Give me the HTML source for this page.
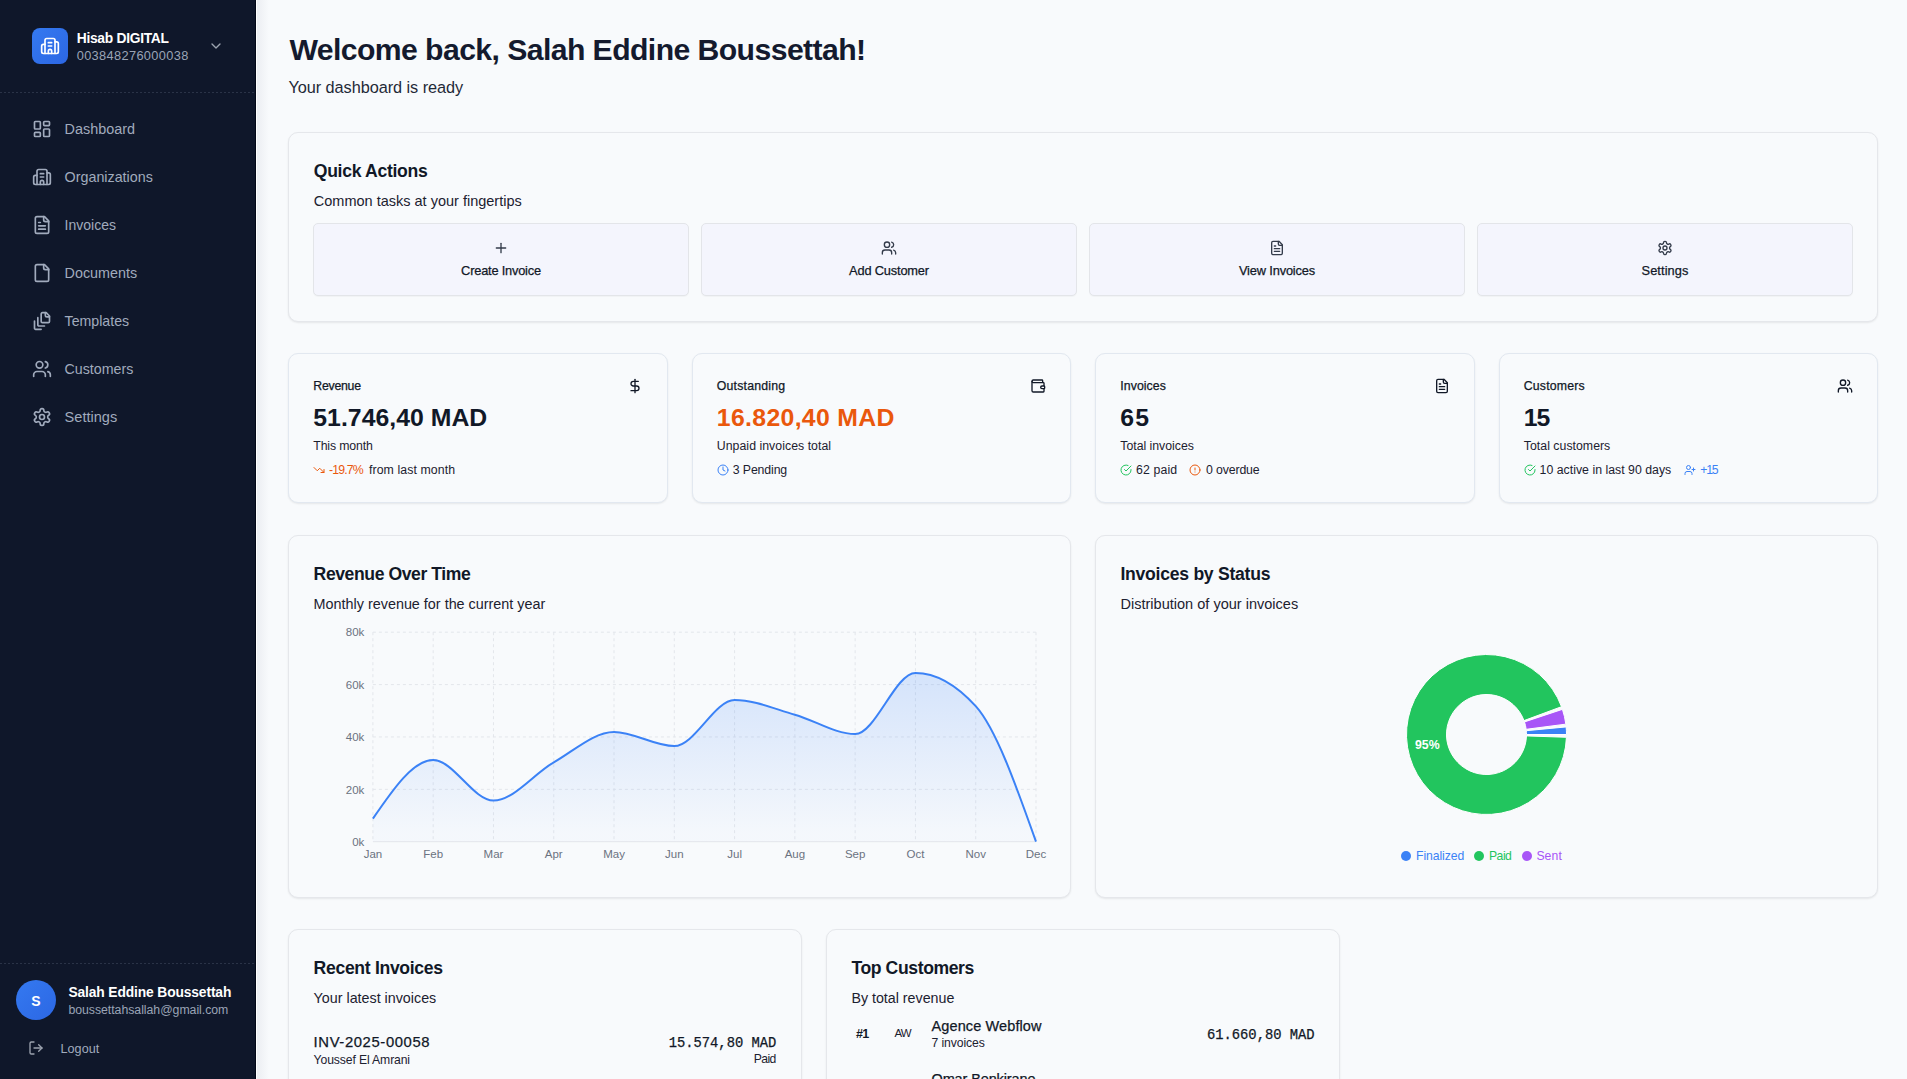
<!DOCTYPE html><html><head><meta charset="utf-8"><title>Dashboard</title><style>
*{box-sizing:border-box;margin:0;padding:0}
html,body{width:1907px;height:1079px;overflow:hidden}
body{position:relative;background:#f8fafc;font-family:"Liberation Sans",sans-serif;}
.t{position:absolute;white-space:nowrap;line-height:1;}
.ic{position:absolute;display:block}
.card{position:absolute;border:1px solid #e5e7eb;border-radius:10px;background:#f8fafc;box-shadow:0 1px 2px rgba(0,0,0,0.08)}
.qa{position:absolute;border:1px solid #e3e5e9;border-radius:5px;background:#f4f5fd;box-shadow:0 1px 1px rgba(0,0,0,0.03)}
</style></head><body>
<div style="position:absolute;left:0;top:0;width:256px;height:1079px;background:#0f172a"></div>
<div style="position:absolute;left:255px;top:0;width:1px;height:1079px;background:#020817"></div>
<div style="position:absolute;left:256px;top:0;width:1px;height:1079px;background:#ffffff"></div>
<div style="position:absolute;left:257px;top:0;width:12px;height:1079px;background:linear-gradient(90deg,#eceef2,rgba(248,250,252,0))"></div>
<div style="position:absolute;left:32px;top:28px;width:36px;height:36px;border-radius:8px;background:linear-gradient(135deg,#3479f0,#2c67e4)"></div>
<svg class="ic" style="left:40.00px;top:36.00px" width="20" height="20" viewBox="0 0 24 24" fill="none" stroke="#ffffff" stroke-width="2" stroke-linecap="round" stroke-linejoin="round"><path d="M10 12h4"/><path d="M10 8h4"/><path d="M14 21v-3a2 2 0 0 0-4 0v3"/><path d="M6 10H4a2 2 0 0 0-2 2v7a2 2 0 0 0 2 2h16a2 2 0 0 0 2-2V9a2 2 0 0 0-2-2h-2"/><path d="M6 21V5a2 2 0 0 1 2-2h8a2 2 0 0 1 2 2v16"/></svg>
<div class="t" style="top:32.02px;font-size:13.80px;font-weight:700;color:#ffffff;letter-spacing:-0.274px;left:76.70px;">Hisab DIGITAL</div>
<div class="t" style="top:49.56px;font-size:12.80px;font-weight:400;color:#9aa4b6;letter-spacing:0.344px;left:76.70px;">003848276000038</div>
<svg class="ic" style="left:208.00px;top:38.00px" width="16" height="16" viewBox="0 0 24 24" fill="none" stroke="#9ca3af" stroke-width="2" stroke-linecap="round" stroke-linejoin="round"><path d="m6 9 6 6 6-6"/></svg>
<div style="position:absolute;left:0;top:92px;width:255px;height:1px;background:repeating-linear-gradient(90deg,#2a3347 0 2px,transparent 2px 4px)"></div>
<svg class="ic" style="left:32.00px;top:119.00px" width="20" height="20" viewBox="0 0 24 24" fill="none" stroke="#a1abbd" stroke-width="2" stroke-linecap="round" stroke-linejoin="round"><rect width="7" height="9" x="3" y="3" rx="1"/><rect width="7" height="5" x="14" y="3" rx="1"/><rect width="7" height="9" x="14" y="12" rx="1"/><rect width="7" height="5" x="3" y="16" rx="1"/></svg>
<div class="t" style="top:121.92px;font-size:14.39px;font-weight:400;color:#a1abbd;left:64.60px;">Dashboard</div>
<svg class="ic" style="left:32.00px;top:167.00px" width="20" height="20" viewBox="0 0 24 24" fill="none" stroke="#a1abbd" stroke-width="2" stroke-linecap="round" stroke-linejoin="round"><path d="M10 12h4"/><path d="M10 8h4"/><path d="M14 21v-3a2 2 0 0 0-4 0v3"/><path d="M6 10H4a2 2 0 0 0-2 2v7a2 2 0 0 0 2 2h16a2 2 0 0 0 2-2V9a2 2 0 0 0-2-2h-2"/><path d="M6 21V5a2 2 0 0 1 2-2h8a2 2 0 0 1 2 2v16"/></svg>
<div class="t" style="top:169.98px;font-size:14.31px;font-weight:400;color:#a1abbd;left:64.60px;">Organizations</div>
<svg class="ic" style="left:32.00px;top:215.00px" width="20" height="20" viewBox="0 0 24 24" fill="none" stroke="#a1abbd" stroke-width="2" stroke-linecap="round" stroke-linejoin="round"><path d="M15 2H6a2 2 0 0 0-2 2v16a2 2 0 0 0 2 2h12a2 2 0 0 0 2-2V7Z"/><path d="M14 2v4a2 2 0 0 0 2 2h4"/><path d="M10 9H8"/><path d="M16 13H8"/><path d="M16 17H8"/></svg>
<div class="t" style="top:218.24px;font-size:14.01px;font-weight:400;color:#a1abbd;left:64.60px;">Invoices</div>
<svg class="ic" style="left:32.00px;top:263.00px" width="20" height="20" viewBox="0 0 24 24" fill="none" stroke="#a1abbd" stroke-width="2" stroke-linecap="round" stroke-linejoin="round"><path d="M15 2H6a2 2 0 0 0-2 2v16a2 2 0 0 0 2 2h12a2 2 0 0 0 2-2V7Z"/><path d="M14 2v4a2 2 0 0 0 2 2h4"/></svg>
<div class="t" style="top:265.96px;font-size:14.33px;font-weight:400;color:#a1abbd;left:64.60px;">Documents</div>
<svg class="ic" style="left:32.00px;top:311.00px" width="20" height="20" viewBox="0 0 24 24" fill="none" stroke="#a1abbd" stroke-width="2" stroke-linecap="round" stroke-linejoin="round"><path d="M21 7h-3a2 2 0 0 1-2-2V2"/><path d="M21 6v6.5c0 .8-.7 1.5-1.5 1.5h-7c-.8 0-1.5-.7-1.5-1.5v-9c0-.8.7-1.5 1.5-1.5H17Z"/><path d="M7 8v8.8c0 .3.2.6.4.8.2.2.5.4.8.4H15"/><path d="M3 12v8.8c0 .3.2.6.4.8.2.2.5.4.8.4H11"/></svg>
<div class="t" style="top:314.10px;font-size:14.17px;font-weight:400;color:#a1abbd;left:64.60px;">Templates</div>
<svg class="ic" style="left:32.00px;top:359.00px" width="20" height="20" viewBox="0 0 24 24" fill="none" stroke="#a1abbd" stroke-width="2" stroke-linecap="round" stroke-linejoin="round"><path d="M16 21v-2a4 4 0 0 0-4-4H6a4 4 0 0 0-4 4v2"/><circle cx="9" cy="7" r="4"/><path d="M22 21v-2a4 4 0 0 0-3-3.87"/><path d="M16 3.13a4 4 0 0 1 0 7.75"/></svg>
<div class="t" style="top:362.07px;font-size:14.21px;font-weight:400;color:#a1abbd;left:64.60px;">Customers</div>
<svg class="ic" style="left:32.00px;top:407.00px" width="20" height="20" viewBox="0 0 24 24" fill="none" stroke="#a1abbd" stroke-width="2" stroke-linecap="round" stroke-linejoin="round"><path d="M12.22 2h-.44a2 2 0 0 0-2 2v.18a2 2 0 0 1-1 1.73l-.43.25a2 2 0 0 1-2 0l-.15-.08a2 2 0 0 0-2.73.73l-.22.38a2 2 0 0 0 .73 2.730l.15.1a2 2 0 0 1 1 1.72v.51a2 2 0 0 1-1 1.74l-.15.09a2 2 0 0 0-.73 2.73l.22.38a2 2 0 0 0 2.73.73l.15-.08a2 2 0 0 1 2 0l.43.25a2 2 0 0 1 1 1.73V20a2 2 0 0 0 2 2h.44a2 2 0 0 0 2-2v-.18a2 2 0 0 1 1-1.73l.43-.25a2 2 0 0 1 2 0l.15.08a2 2 0 0 0 2.73-.73l.22-.39a2 2 0 0 0-.73-2.73l-.15-.08a2 2 0 0 1-1-1.74v-.5a2 2 0 0 1 1-1.74l.15-.09a2 2 0 0 0 .73-2.73l-.22-.38a2 2 0 0 0-2.73-.73l-.15.08a2 2 0 0 1-2 0l-.43-.25a2 2 0 0 1-1-1.73V4a2 2 0 0 0-2-2z"/><circle cx="12" cy="12" r="3"/></svg>
<div class="t" style="top:409.77px;font-size:14.56px;font-weight:400;color:#a1abbd;left:64.60px;">Settings</div>
<div style="position:absolute;left:0;top:963px;width:255px;height:1px;background:repeating-linear-gradient(90deg,#2a3347 0 2px,transparent 2px 4px)"></div>
<div style="position:absolute;left:16px;top:980px;width:40px;height:40px;border-radius:50%;background:linear-gradient(135deg,#3479f0,#2c67e4)"></div>
<div class="t" style="top:993.65px;font-size:14.00px;font-weight:700;color:#ffffff;left:-1964.00px;width:4000px;text-align:center;">S</div>
<div class="t" style="top:986.42px;font-size:13.80px;font-weight:700;color:#ffffff;letter-spacing:-0.120px;left:68.40px;">Salah Eddine Boussettah</div>
<div class="t" style="top:1004.19px;font-size:12.30px;font-weight:400;color:#9aa4b6;letter-spacing:-0.034px;left:68.40px;">boussettahsallah@gmail.com</div>
<svg class="ic" style="left:28.00px;top:1040.00px" width="16" height="16" viewBox="0 0 24 24" fill="none" stroke="#9ca3af" stroke-width="2" stroke-linecap="round" stroke-linejoin="round"><path d="M9 21H5a2 2 0 0 1-2-2V5a2 2 0 0 1 2-2h4"/><polyline points="16 17 21 12 16 7"/><line x1="21" x2="9" y1="12" y2="12"/></svg>
<div class="t" style="top:1042.53px;font-size:12.60px;font-weight:400;color:#a1abbd;letter-spacing:0.092px;left:60.40px;">Logout</div>
<div class="t" style="top:34.53px;font-size:30.20px;font-weight:700;color:#141a2e;letter-spacing:-0.583px;left:289.40px;">Welcome back, Salah Eddine Boussettah!</div>
<div class="t" style="top:78.80px;font-size:16.30px;font-weight:400;color:#1f2937;letter-spacing:-0.050px;left:288.40px;">Your dashboard is ready</div>
<div class="card" style="left:288px;top:132px;width:1590px;height:190px"></div>
<div class="t" style="top:163.20px;font-size:17.60px;font-weight:700;color:#111827;letter-spacing:-0.307px;left:313.80px;">Quick Actions</div>
<div class="t" style="top:193.72px;font-size:14.51px;font-weight:400;color:#1c2130;left:313.80px;">Common tasks at your fingertips</div>
<div class="qa" style="left:313px;top:223px;width:376px;height:73px"></div>
<svg class="ic" style="left:493.00px;top:240.00px" width="16" height="16" viewBox="0 0 24 24" fill="none" stroke="#333b4a" stroke-width="2" stroke-linecap="round" stroke-linejoin="round"><path d="M5 12h14"/><path d="M12 5v14"/></svg>
<div class="t" style="top:265.26px;font-size:12.80px;font-weight:400;color:#111827;-webkit-text-stroke:0.25px currentColor;letter-spacing:-0.195px;left:-1499.00px;width:4000px;text-align:center;">Create Invoice</div>
<div class="qa" style="left:701px;top:223px;width:376px;height:73px"></div>
<svg class="ic" style="left:881.00px;top:240.00px" width="16" height="16" viewBox="0 0 24 24" fill="none" stroke="#333b4a" stroke-width="2" stroke-linecap="round" stroke-linejoin="round"><path d="M16 21v-2a4 4 0 0 0-4-4H6a4 4 0 0 0-4 4v2"/><circle cx="9" cy="7" r="4"/><path d="M22 21v-2a4 4 0 0 0-3-3.87"/><path d="M16 3.13a4 4 0 0 1 0 7.75"/></svg>
<div class="t" style="top:265.26px;font-size:12.80px;font-weight:400;color:#111827;-webkit-text-stroke:0.25px currentColor;letter-spacing:-0.165px;left:-1111.00px;width:4000px;text-align:center;">Add Customer</div>
<div class="qa" style="left:1089px;top:223px;width:376px;height:73px"></div>
<svg class="ic" style="left:1269.00px;top:240.00px" width="16" height="16" viewBox="0 0 24 24" fill="none" stroke="#333b4a" stroke-width="2" stroke-linecap="round" stroke-linejoin="round"><path d="M15 2H6a2 2 0 0 0-2 2v16a2 2 0 0 0 2 2h12a2 2 0 0 0 2-2V7Z"/><path d="M14 2v4a2 2 0 0 0 2 2h4"/><path d="M10 9H8"/><path d="M16 13H8"/><path d="M16 17H8"/></svg>
<div class="t" style="top:265.26px;font-size:12.80px;font-weight:400;color:#111827;-webkit-text-stroke:0.25px currentColor;letter-spacing:-0.144px;left:-723.00px;width:4000px;text-align:center;">View Invoices</div>
<div class="qa" style="left:1477px;top:223px;width:376px;height:73px"></div>
<svg class="ic" style="left:1657.00px;top:240.00px" width="16" height="16" viewBox="0 0 24 24" fill="none" stroke="#333b4a" stroke-width="2" stroke-linecap="round" stroke-linejoin="round"><path d="M12.22 2h-.44a2 2 0 0 0-2 2v.18a2 2 0 0 1-1 1.73l-.43.25a2 2 0 0 1-2 0l-.15-.08a2 2 0 0 0-2.73.73l-.22.38a2 2 0 0 0 .73 2.730l.15.1a2 2 0 0 1 1 1.72v.51a2 2 0 0 1-1 1.74l-.15.09a2 2 0 0 0-.73 2.73l.22.38a2 2 0 0 0 2.73.73l.15-.08a2 2 0 0 1 2 0l.43.25a2 2 0 0 1 1 1.73V20a2 2 0 0 0 2 2h.44a2 2 0 0 0 2-2v-.18a2 2 0 0 1 1-1.73l.43-.25a2 2 0 0 1 2 0l.15.08a2 2 0 0 0 2.73-.73l.22-.39a2 2 0 0 0-.73-2.73l-.15-.08a2 2 0 0 1-1-1.74v-.5a2 2 0 0 1 1-1.74l.15-.09a2 2 0 0 0 .73-2.73l-.22-.38a2 2 0 0 0-2.73-.73l-.15.08a2 2 0 0 1-2 0l-.43-.25a2 2 0 0 1-1-1.73V4a2 2 0 0 0-2-2z"/><circle cx="12" cy="12" r="3"/></svg>
<div class="t" style="top:265.26px;font-size:12.80px;font-weight:400;color:#111827;-webkit-text-stroke:0.25px currentColor;letter-spacing:0.078px;left:-335.00px;width:4000px;text-align:center;">Settings</div>
<div class="card" style="left:288.0px;top:353px;width:379.5px;height:150px;border-color:#e2e8f0"></div>
<div class="t" style="top:379.69px;font-size:12.30px;font-weight:400;color:#111827;-webkit-text-stroke:0.25px currentColor;letter-spacing:-0.256px;left:313.30px;">Revenue</div>
<svg class="ic" style="left:626.50px;top:378.00px" width="16" height="16" viewBox="0 0 24 24" fill="none" stroke="#111827" stroke-width="2" stroke-linecap="round" stroke-linejoin="round"><line x1="12" x2="12" y1="2" y2="22"/><path d="M17 5H9.5a3.5 3.5 0 0 0 0 7h5a3.5 3.5 0 0 1 0 7H6"/></svg>
<div class="t" style="top:405.70px;font-size:24.80px;font-weight:700;color:#111827;letter-spacing:0.025px;left:313.30px;">51.746,40 MAD</div>
<div class="t" style="top:439.79px;font-size:12.30px;font-weight:400;color:#1c2130;letter-spacing:-0.138px;left:313.30px;">This month</div>
<div class="card" style="left:691.5px;top:353px;width:379.5px;height:150px;border-color:#e2e8f0"></div>
<div class="t" style="top:379.69px;font-size:12.30px;font-weight:400;color:#111827;-webkit-text-stroke:0.25px currentColor;letter-spacing:0.207px;left:716.80px;">Outstanding</div>
<svg class="ic" style="left:1030.00px;top:378.00px" width="16" height="16" viewBox="0 0 24 24" fill="none" stroke="#111827" stroke-width="2" stroke-linecap="round" stroke-linejoin="round"><path d="M19 7V4a1 1 0 0 0-1-1H5a2 2 0 0 0 0 4h15a1 1 0 0 1 1 1v4h-3a2 2 0 0 0 0 4h3a1 1 0 0 0 1-1v-2a1 1 0 0 0-1-1"/><path d="M3 5v14a2 2 0 0 0 2 2h15a1 1 0 0 0 1-1v-4"/></svg>
<div class="t" style="top:405.70px;font-size:24.80px;font-weight:700;color:#ea580c;letter-spacing:0.333px;left:716.80px;">16.820,40 MAD</div>
<div class="t" style="top:439.79px;font-size:12.30px;font-weight:400;color:#1c2130;letter-spacing:0.040px;left:716.80px;">Unpaid invoices total</div>
<div class="card" style="left:1095.0px;top:353px;width:379.5px;height:150px;border-color:#e2e8f0"></div>
<div class="t" style="top:379.69px;font-size:12.30px;font-weight:400;color:#111827;-webkit-text-stroke:0.25px currentColor;letter-spacing:0.068px;left:1120.30px;">Invoices</div>
<svg class="ic" style="left:1433.50px;top:378.00px" width="16" height="16" viewBox="0 0 24 24" fill="none" stroke="#111827" stroke-width="2" stroke-linecap="round" stroke-linejoin="round"><path d="M15 2H6a2 2 0 0 0-2 2v16a2 2 0 0 0 2 2h12a2 2 0 0 0 2-2V7Z"/><path d="M14 2v4a2 2 0 0 0 2 2h4"/><path d="M10 9H8"/><path d="M16 13H8"/><path d="M16 17H8"/></svg>
<div class="t" style="top:405.70px;font-size:24.80px;font-weight:700;color:#111827;letter-spacing:1.200px;left:1120.30px;">65</div>
<div class="t" style="top:439.79px;font-size:12.30px;font-weight:400;color:#1c2130;letter-spacing:-0.018px;left:1120.30px;">Total invoices</div>
<div class="card" style="left:1498.5px;top:353px;width:379.5px;height:150px;border-color:#e2e8f0"></div>
<div class="t" style="top:379.69px;font-size:12.30px;font-weight:400;color:#111827;-webkit-text-stroke:0.25px currentColor;letter-spacing:0.167px;left:1523.80px;">Customers</div>
<svg class="ic" style="left:1837.00px;top:378.00px" width="16" height="16" viewBox="0 0 24 24" fill="none" stroke="#111827" stroke-width="2" stroke-linecap="round" stroke-linejoin="round"><path d="M16 21v-2a4 4 0 0 0-4-4H6a4 4 0 0 0-4 4v2"/><circle cx="9" cy="7" r="4"/><path d="M22 21v-2a4 4 0 0 0-3-3.87"/><path d="M16 3.13a4 4 0 0 1 0 7.75"/></svg>
<div class="t" style="top:405.70px;font-size:24.80px;font-weight:700;color:#111827;letter-spacing:-1.200px;left:1523.80px;">15</div>
<div class="t" style="top:439.79px;font-size:12.30px;font-weight:400;color:#1c2130;letter-spacing:0.026px;left:1523.80px;">Total customers</div>
<svg class="ic" style="left:313.30px;top:464.00px" width="12" height="12" viewBox="0 0 24 24" fill="none" stroke="#ea580c" stroke-width="2" stroke-linecap="round" stroke-linejoin="round"><polyline points="22 17 13.5 8.5 8.5 13.5 2 7"/><polyline points="16 17 22 17 22 11"/></svg>
<div class="t" style="top:464.19px;font-size:12.30px;font-weight:400;color:#ea580c;letter-spacing:-0.835px;left:329.00px;">-19.7%</div>
<div class="t" style="top:464.19px;font-size:12.30px;font-weight:400;color:#1c2130;letter-spacing:0.088px;left:369.00px;">from last month</div>
<svg class="ic" style="left:717.00px;top:464.00px" width="12" height="12" viewBox="0 0 24 24" fill="none" stroke="#3b82f6" stroke-width="2" stroke-linecap="round" stroke-linejoin="round"><circle cx="12" cy="12" r="10"/><polyline points="12 6 12 12 16 14"/></svg>
<div class="t" style="top:464.19px;font-size:12.30px;font-weight:400;color:#1c2130;letter-spacing:-0.125px;left:732.80px;">3 Pending</div>
<svg class="ic" style="left:1120.00px;top:464.00px" width="12" height="12" viewBox="0 0 24 24" fill="none" stroke="#22c55e" stroke-width="2" stroke-linecap="round" stroke-linejoin="round"><path d="M22 11.08V12a10 10 0 1 1-5.93-9.14"/><path d="m9 11 3 3L22 4"/></svg>
<div class="t" style="top:464.19px;font-size:12.30px;font-weight:400;color:#1c2130;letter-spacing:0.108px;left:1136.10px;">62 paid</div>
<svg class="ic" style="left:1189.40px;top:464.00px" width="12" height="12" viewBox="0 0 24 24" fill="none" stroke="#ea580c" stroke-width="2" stroke-linecap="round" stroke-linejoin="round"><circle cx="12" cy="12" r="10"/><line x1="12" x2="12" y1="8" y2="12"/><line x1="12" x2="12.01" y1="16" y2="16"/></svg>
<div class="t" style="top:464.19px;font-size:12.30px;font-weight:400;color:#1c2130;letter-spacing:-0.114px;left:1205.90px;">0 overdue</div>
<svg class="ic" style="left:1524.00px;top:464.00px" width="12" height="12" viewBox="0 0 24 24" fill="none" stroke="#22c55e" stroke-width="2" stroke-linecap="round" stroke-linejoin="round"><path d="M22 11.08V12a10 10 0 1 1-5.93-9.14"/><path d="m9 11 3 3L22 4"/></svg>
<div class="t" style="top:464.19px;font-size:12.30px;font-weight:400;color:#1c2130;letter-spacing:0.018px;left:1539.60px;">10 active in last 90 days</div>
<svg class="ic" style="left:1684.00px;top:464.00px" width="12" height="12" viewBox="0 0 24 24" fill="none" stroke="#3b82f6" stroke-width="2" stroke-linecap="round" stroke-linejoin="round"><path d="M16 21v-2a4 4 0 0 0-4-4H6a4 4 0 0 0-4 4v2"/><circle cx="9" cy="7" r="4"/><line x1="19" x2="19" y1="8" y2="14"/><line x1="22" x2="16" y1="11" y2="11"/></svg>
<div class="t" style="top:464.19px;font-size:12.30px;font-weight:400;color:#3b82f6;letter-spacing:-1.200px;left:1700.20px;">+15</div>
<div class="card" style="left:288px;top:535px;width:783px;height:363px"></div>
<div class="card" style="left:1095px;top:535px;width:783px;height:363px"></div>
<div class="t" style="top:565.60px;font-size:17.60px;font-weight:700;color:#111827;letter-spacing:-0.420px;left:313.60px;">Revenue Over Time</div>
<div class="t" style="top:596.71px;font-size:14.39px;font-weight:400;color:#1c2130;left:313.60px;">Monthly revenue for the current year</div>
<div class="t" style="top:565.70px;font-size:17.60px;font-weight:700;color:#111827;letter-spacing:-0.267px;left:1120.50px;">Invoices by Status</div>
<div class="t" style="top:596.59px;font-size:14.54px;font-weight:400;color:#1c2130;left:1120.50px;">Distribution of your invoices</div>
<svg style="position:absolute;left:0;top:0" width="1907" height="1079" viewBox="0 0 1907 1079"><defs><linearGradient id="rg" x1="0" y1="0" x2="0" y2="1"><stop offset="5%" stop-color="#3b82f6" stop-opacity="0.18"/><stop offset="95%" stop-color="#3b82f6" stop-opacity="0.02"/></linearGradient></defs><g stroke="#e3e6eb" stroke-width="1" stroke-dasharray="3 3"><line x1="372.90" y1="632.2" x2="372.90" y2="841.7" /><line x1="433.18" y1="632.2" x2="433.18" y2="841.7" /><line x1="493.46" y1="632.2" x2="493.46" y2="841.7" /><line x1="553.75" y1="632.2" x2="553.75" y2="841.7" /><line x1="614.03" y1="632.2" x2="614.03" y2="841.7" /><line x1="674.31" y1="632.2" x2="674.31" y2="841.7" /><line x1="734.59" y1="632.2" x2="734.59" y2="841.7" /><line x1="794.87" y1="632.2" x2="794.87" y2="841.7" /><line x1="855.15" y1="632.2" x2="855.15" y2="841.7" /><line x1="915.44" y1="632.2" x2="915.44" y2="841.7" /><line x1="975.72" y1="632.2" x2="975.72" y2="841.7" /><line x1="1036.00" y1="632.2" x2="1036.00" y2="841.7" /><line x1="372.9" y1="789.33" x2="1036" y2="789.33" /><line x1="372.9" y1="736.95" x2="1036" y2="736.95" /><line x1="372.9" y1="684.58" x2="1036" y2="684.58" /><line x1="372.9" y1="632.20" x2="1036" y2="632.20" /></g><line x1="372.9" y1="841.7" x2="1036" y2="841.7" stroke="#e5e7eb" stroke-width="1"/><path d="M372.90,818.60C392.99,789.30,413.09,760.00,433.18,760.00C453.28,760.00,473.37,800.59,493.46,800.59C513.56,800.59,533.65,773.79,553.75,762.35C573.84,750.92,593.93,731.97,614.03,731.97C634.12,731.97,654.22,746.12,674.31,746.12C694.40,746.12,714.50,700.03,734.59,700.03C754.68,700.03,774.78,709.02,794.87,714.69C814.97,720.36,835.06,734.07,855.15,734.07C875.25,734.07,895.34,672.95,915.44,672.95C935.53,672.95,955.62,684.03,975.72,706.19C995.81,728.35,1015.91,785.03,1036.00,841.70L1036,841.7L372.9,841.7Z" fill="url(#rg)" stroke="none"/><path d="M372.90,818.60C392.99,789.30,413.09,760.00,433.18,760.00C453.28,760.00,473.37,800.59,493.46,800.59C513.56,800.59,533.65,773.79,553.75,762.35C573.84,750.92,593.93,731.97,614.03,731.97C634.12,731.97,654.22,746.12,674.31,746.12C694.40,746.12,714.50,700.03,734.59,700.03C754.68,700.03,774.78,709.02,794.87,714.69C814.97,720.36,835.06,734.07,855.15,734.07C875.25,734.07,895.34,672.95,915.44,672.95C935.53,672.95,955.62,684.03,975.72,706.19C995.81,728.35,1015.91,785.03,1036.00,841.70" fill="none" stroke="#3b82f6" stroke-width="2"/><path d="M1566.50,734.50A80,80 0 0 0 1566.14,726.91L1526.32,730.70A40,40 0 0 1 1526.50,734.50Z" fill="#3b82f6" stroke="#ffffff" stroke-width="1"/><path d="M1565.83,724.13A80,80 0 0 0 1562.44,709.33L1524.47,721.91A40,40 0 0 1 1526.16,729.32Z" fill="#a855f7" stroke="#ffffff" stroke-width="1"/><path d="M1561.51,706.69A80,80 0 1 0 1566.45,737.29L1526.48,735.90A40,40 0 1 1 1524.01,720.60Z" fill="#22c55e" stroke="#ffffff" stroke-width="1"/></svg>
<div class="t" style="top:836.96px;font-size:11.50px;font-weight:400;color:#6b7280;right:1542.70px;">0k</div>
<div class="t" style="top:784.59px;font-size:11.50px;font-weight:400;color:#6b7280;right:1542.70px;">20k</div>
<div class="t" style="top:732.21px;font-size:11.50px;font-weight:400;color:#6b7280;right:1542.70px;">40k</div>
<div class="t" style="top:679.84px;font-size:11.50px;font-weight:400;color:#6b7280;right:1542.70px;">60k</div>
<div class="t" style="top:627.46px;font-size:11.50px;font-weight:400;color:#6b7280;right:1542.70px;">80k</div>
<div class="t" style="top:848.76px;font-size:11.50px;font-weight:400;color:#6b7280;left:-1627.10px;width:4000px;text-align:center;">Jan</div>
<div class="t" style="top:848.76px;font-size:11.50px;font-weight:400;color:#6b7280;left:-1566.82px;width:4000px;text-align:center;">Feb</div>
<div class="t" style="top:848.76px;font-size:11.50px;font-weight:400;color:#6b7280;left:-1506.54px;width:4000px;text-align:center;">Mar</div>
<div class="t" style="top:848.76px;font-size:11.50px;font-weight:400;color:#6b7280;left:-1446.25px;width:4000px;text-align:center;">Apr</div>
<div class="t" style="top:848.76px;font-size:11.50px;font-weight:400;color:#6b7280;left:-1385.97px;width:4000px;text-align:center;">May</div>
<div class="t" style="top:848.76px;font-size:11.50px;font-weight:400;color:#6b7280;left:-1325.69px;width:4000px;text-align:center;">Jun</div>
<div class="t" style="top:848.76px;font-size:11.50px;font-weight:400;color:#6b7280;left:-1265.41px;width:4000px;text-align:center;">Jul</div>
<div class="t" style="top:848.76px;font-size:11.50px;font-weight:400;color:#6b7280;left:-1205.13px;width:4000px;text-align:center;">Aug</div>
<div class="t" style="top:848.76px;font-size:11.50px;font-weight:400;color:#6b7280;left:-1144.85px;width:4000px;text-align:center;">Sep</div>
<div class="t" style="top:848.76px;font-size:11.50px;font-weight:400;color:#6b7280;left:-1084.56px;width:4000px;text-align:center;">Oct</div>
<div class="t" style="top:848.76px;font-size:11.50px;font-weight:400;color:#6b7280;left:-1024.28px;width:4000px;text-align:center;">Nov</div>
<div class="t" style="top:848.76px;font-size:11.50px;font-weight:400;color:#6b7280;left:-964.00px;width:4000px;text-align:center;">Dec</div>
<div class="t" style="top:739.49px;font-size:12.30px;font-weight:700;color:#ffffff;left:-572.70px;width:4000px;text-align:center;">95%</div>
<div style="position:absolute;left:1401px;top:851px;width:10px;height:10px;border-radius:50%;background:#3b82f6"></div>
<div class="t" style="top:849.57px;font-size:12.20px;font-weight:400;color:#3b82f6;letter-spacing:-0.066px;left:1416.00px;">Finalized</div>
<div style="position:absolute;left:1474px;top:851px;width:10px;height:10px;border-radius:50%;background:#22c55e"></div>
<div class="t" style="top:849.57px;font-size:12.20px;font-weight:400;color:#22c55e;letter-spacing:-0.506px;left:1489.00px;">Paid</div>
<div style="position:absolute;left:1522px;top:851px;width:10px;height:10px;border-radius:50%;background:#a855f7"></div>
<div class="t" style="top:849.57px;font-size:12.20px;font-weight:400;color:#a855f7;letter-spacing:0.101px;left:1536.40px;">Sent</div>
<div class="card" style="left:288px;top:929px;width:514px;height:200px"></div>
<div class="card" style="left:826px;top:929px;width:514px;height:200px"></div>
<div class="t" style="top:960.00px;font-size:17.60px;font-weight:700;color:#111827;letter-spacing:-0.322px;left:313.60px;">Recent Invoices</div>
<div class="t" style="top:990.79px;font-size:14.30px;font-weight:400;color:#1c2130;left:313.60px;">Your latest invoices</div>
<div class="t" style="top:1034.87px;font-size:14.80px;font-weight:400;color:#111827;-webkit-text-stroke:0.25px currentColor;letter-spacing:0.631px;left:313.60px;">INV-2025-00058</div>
<div class="t" style="top:1053.87px;font-size:12.20px;font-weight:400;color:#1c2130;letter-spacing:-0.123px;left:313.60px;">Youssef El Amrani</div>
<div class="t" style="top:1037.13px;font-size:13.80px;font-weight:400;color:#111827;font-family:'Liberation Mono', monospace;-webkit-text-stroke:0.25px currentColor;right:1130.70px;">15.574,80 MAD</div>
<div class="t" style="top:1053.47px;font-size:12.20px;font-weight:400;color:#1c2130;letter-spacing:-0.606px;right:1131.31px;">Paid</div>
<div class="t" style="top:959.80px;font-size:17.60px;font-weight:700;color:#111827;letter-spacing:-0.398px;left:851.40px;">Top Customers</div>
<div class="t" style="top:990.53px;font-size:14.25px;font-weight:400;color:#1c2130;left:851.40px;">By total revenue</div>
<div class="t" style="top:1027.92px;font-size:12.50px;font-weight:700;color:#111827;letter-spacing:-0.704px;left:856.10px;">#1</div>
<div class="t" style="top:1028.16px;font-size:11.50px;font-weight:400;color:#1c2130;letter-spacing:-0.798px;left:894.40px;">AW</div>
<div class="t" style="top:1019.02px;font-size:14.50px;font-weight:400;color:#111827;-webkit-text-stroke:0.25px currentColor;letter-spacing:0.112px;left:931.50px;">Agence Webflow</div>
<div class="t" style="top:1037.07px;font-size:12.20px;font-weight:400;color:#1c2130;letter-spacing:-0.095px;left:931.50px;">7 invoices</div>
<div class="t" style="top:1029.03px;font-size:13.80px;font-weight:400;color:#111827;font-family:'Liberation Mono', monospace;-webkit-text-stroke:0.25px currentColor;right:592.40px;">61.660,80 MAD</div>
<div class="t" style="top:1071.92px;font-size:14.50px;font-weight:400;color:#111827;-webkit-text-stroke:0.25px currentColor;letter-spacing:-0.121px;left:931.50px;">Omar Benkirane</div>
</body></html>
